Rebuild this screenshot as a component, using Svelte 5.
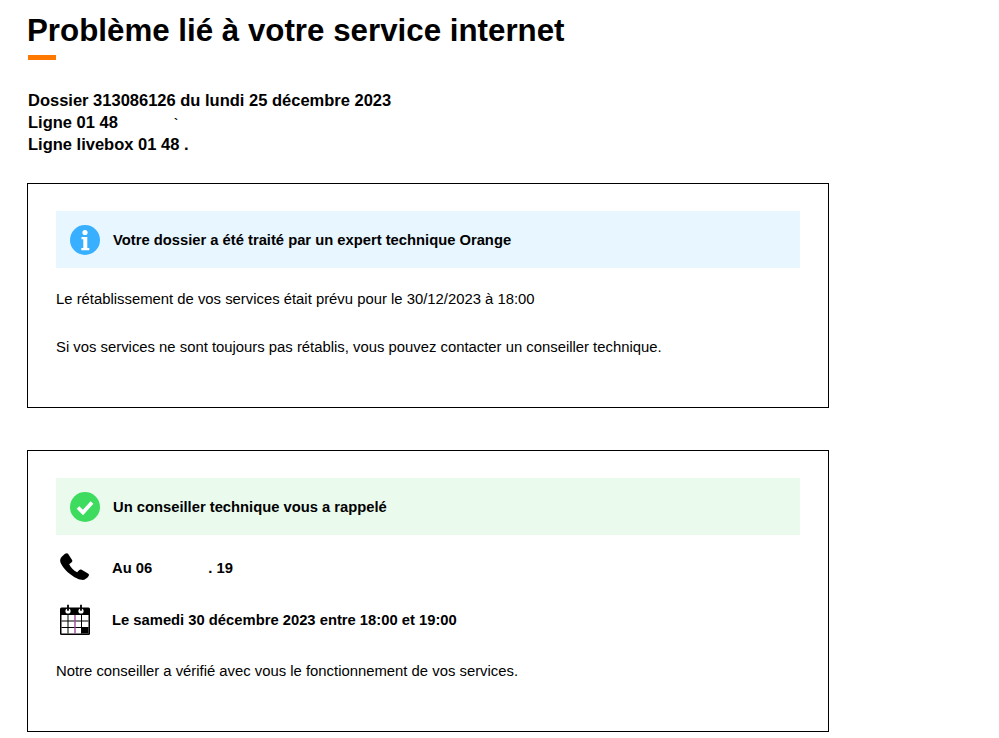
<script>
  const dossier = 'Dossier 313086126 du lundi 25 décembre 2023';
</script>

<main>
  <h1>Problème lié à votre service internet</h1>
  <div class="accent"></div>

  <p class="refs">
    <span>{dossier}</span>
    <span>Ligne 01 48<i class="trace">`</i></span>
    <span>Ligne livebox 01 48 .</span>
  </p>

  <section class="card first">
    <div class="banner info">
      <svg width="30" height="30" viewBox="0 0 30 30">
        <circle cx="15" cy="15" r="15" fill="#38b0ff" />
        <circle cx="15" cy="7.5" r="2.6" fill="#fff" />
        <path d="M11.500 12h5.800v11h2v2.200h-8v-2.200h2v-8.800h-1.800z" fill="#fff" />
      </svg>
      <strong>Votre dossier a été traité par un expert technique Orange</strong>
    </div>
    <p class="msg">Le rétablissement de vos services était prévu pour le 30/12/2023 à 18:00</p>
    <p class="msg second">Si vos services ne sont toujours pas rétablis, vous pouvez contacter un conseiller technique.</p>
  </section>

  <section class="card">
    <div class="banner ok">
      <svg width="30" height="30" viewBox="0 0 30 30">
        <circle cx="15" cy="15" r="15" fill="#3ddc5f" />
        <path d="M8 15.500l5 5 9-10" fill="none" stroke="#fff" stroke-width="3.800" />
      </svg>
      <strong>Un conseiller technique vous a rappelé</strong>
    </div>
    <div class="row phone">
      <svg width="31" height="30" viewBox="0 0 32 32" preserveAspectRatio="none">
        <path d="M4.500 3.500C6 1.500 8.500.5 9.500 2l4 6.500c.6 1.200.2 2-.8 2.800l-2.200 1.700c1.500 3.500 4.500 6.500 8.200 8.700l2-2.300c.8-.9 1.700-1 2.700-.5l6.500 4c1.300.8 1.300 1.900.5 2.900-1.600 2.300-4 4.300-7 3.900C14 28 2 16 1.200 9.500 1 7 2.500 5 4.500 3.500z" fill="#000" />
      </svg>
      <strong>Au 06</strong><strong class="end">. 19</strong>
    </div>
    <div class="row cal">
      <svg width="32" height="32" viewBox="0 0 32 32">
        <rect x="1" y="3.500" width="30" height="27.500" rx="1.500" fill="#000" />
        <rect x="2.500" y="11" width="27" height="18.500" fill="#fff" />
        <path d="M2.500 17h27M2.500 23.500h27M9 11v18.500M22.500 11v18.500" stroke="#000" stroke-width="1" />
        <path d="M16 11v18.500" stroke="#a2479b" stroke-width="1.400" />
        <rect x="22.500" y="23.500" width="7" height="6" fill="#000" />
        <circle cx="9" cy="7" r="2.600" fill="#fff" />
        <circle cx="22" cy="7" r="2.600" fill="#fff" />
        <path d="M9 .8v6M22 .8v6" stroke="#000" stroke-width="1.800" />
      </svg>
      <strong>Le samedi 30 décembre 2023 entre 18:00 et 19:00</strong>
    </div>
    <p class="msg last">Notre conseiller a vérifié avec vous le fonctionnement de vos services.</p>
  </section>
</main>

<style>
  :global(body) {
    margin: 0;
    background: #fff;
  }

  main {
    height: 738px;
    overflow: hidden;
    padding: 13px 0 0 27px;
    box-sizing: border-box;
    font-family: 'Liberation Sans', Arial, sans-serif;
    color: #000;
  }

  h1 {
    margin: 0;
    font-size: 31.3px;
    line-height: 36px;
    font-weight: 700;
  }

  .accent {
    width: 28px;
    height: 5px;
    margin: 6px 0 0 1px;
    background: #ff7900;
  }

  .refs {
    display: flex;
    flex-direction: column;
    margin: 29px 0 0 1px;
    font-size: 16.5px;
    line-height: 22px;
    font-weight: 700;
  }

  .trace {
    margin-left: 56px;
    font-style: normal;
    font-size: 12px;
    line-height: 0;
  }

  .card {
    width: 802px;
    box-sizing: border-box;
    margin-top: 42px;
    padding: 27px 28px 0;
    border: 1px solid #000;
    height: 282px;
  }

  .card.first {
    height: 225px;
    margin-top: 28px;
  }

  .banner {
    display: flex;
    align-items: center;
    gap: 13px;
    height: 57px;
    padding-left: 14px;
    font-size: 14.75px;
  }

  .info {
    background: #e7f6ff;
  }

  .ok {
    background: #eafbee;
  }

  .msg {
    margin: 22px 0 0;
    font-size: 14.85px;
    line-height: 18px;
  }

  .msg.second {
    margin-top: 30px;
  }

  .msg.last {
    margin-top: 26px;
  }

  .row {
    display: flex;
    align-items: center;
    height: 32px;
    font-size: 14.77px;
  }

  .row svg {
    margin: 0 21px 0 3px;
    flex: none;
  }

  .row.phone svg {
    margin: -2px 22px 0 3px;
  }

  .row.phone {
    margin-top: 17px;
  }

  .row.cal {
    margin-top: 20px;
  }

  .end {
    margin-left: 56px;
  }
</style>
